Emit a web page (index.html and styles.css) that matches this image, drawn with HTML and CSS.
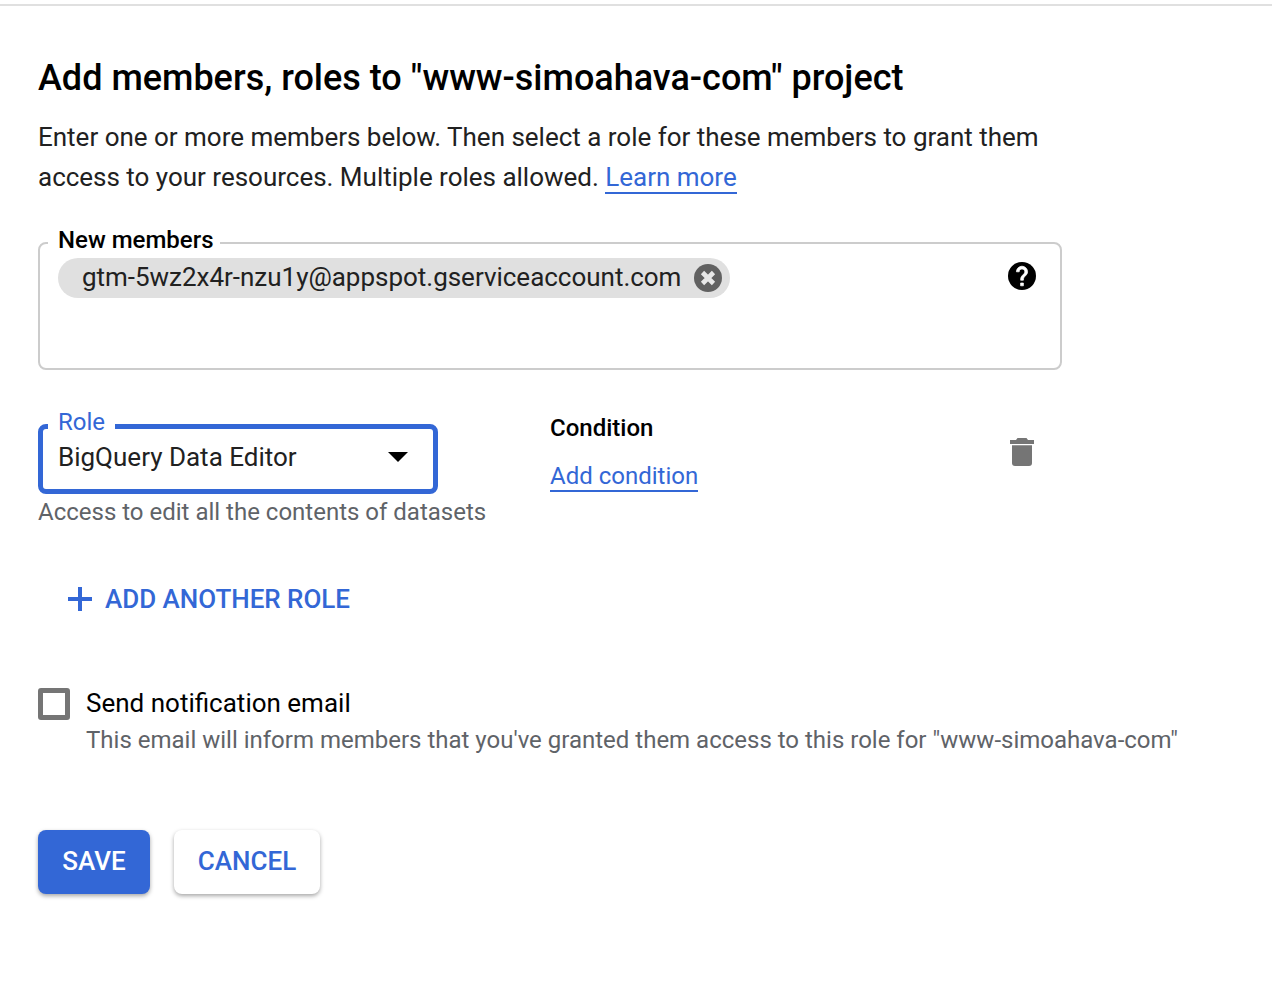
FILE: index.html
```html
<!DOCTYPE html>
<html lang="en">
  <head>
    <meta charset="utf-8">
    <title>Add members</title>
    <link rel="stylesheet" href="styles.css">
  </head>
  <body>
    <div class="panel">
      <h1 class="title">Add members, roles to "www-simoahava-com" project</h1>
      <p class="intro">Enter one or more members below. Then select a role for these members to grant them access to your resources. Multiple roles allowed. <a class="link" href="#">Learn more</a></p>

      <div class="members">
        <span class="float-label">New members</span>
        <div class="chip">
          <span class="chip-text">gtm-5wz2x4r-nzu1y@appspot.gserviceaccount.com</span>
          <svg class="chip-close" viewBox="0 0 28 28" width="28" height="28">
            <circle cx="14" cy="14" r="14" fill="#616161"/>
            <path d="M8.500 8.500l11 11M19.500 8.500l-11 11" stroke="#e8e8e8" stroke-width="4.600" fill="none"/>
          </svg>
        </div>
        <svg class="help" viewBox="2 2 20 20" width="28" height="28">
          <circle cx="12" cy="12" r="10" fill="#000"/>
          <path d="M13 19h-2v-2h2v2zm2.070-7.750l-.9.920C13.450 12.900 13 13.500 13 15h-2v-.5c0-1.100.45-2.100 1.170-2.830l1.240-1.260c.37-.36.59-.86.59-1.410 0-1.100-.9-2-2-2s-2 .9-2 2H8c0-2.210 1.790-4 4-4s4 1.790 4 4c0 .88-.36 1.680-.93 2.250z" fill="#fff" stroke="#fff" stroke-width=".5"/>
        </svg>
      </div>

      <div class="role-row">
        <div class="role-col">
          <div class="role-select">
            <span class="float-label role-label">Role</span>
            <span class="role-value">BigQuery Data Editor</span>
            <span class="caret"></span>
          </div>
          <div class="hint">Access to edit all the contents of datasets</div>
        </div>
        <div class="condition">
          <div class="condition-title">Condition</div>
          <a class="link" href="#">Add condition</a>
        </div>
        <svg class="trash" viewBox="0 0 24 28" width="24" height="28">
          <path d="M0 2h6l1.500-2h9L18 2h6v4H0z" fill="#757575"/>
          <path d="M2 7.300h20V25a3 3 0 0 1-3 3H5a3 3 0 0 1-3-3z" fill="#757575"/>
        </svg>
      </div>

      <div class="add-role">
        <svg viewBox="0 0 24 24" width="24" height="24">
          <path d="M10 0h4v10h10v4H14v10h-4V14H0v-4h10z" fill="#3367d6"/>
        </svg>
        <span>ADD ANOTHER ROLE</span>
      </div>

      <div class="notify">
        <span class="checkbox"></span>
        <div>
          <div class="notify-title">Send notification email</div>
          <div class="notify-hint">This email will inform members that you've granted them access to this role for "www-simoahava-com"</div>
        </div>
      </div>

      <div class="actions">
        <button class="btn btn-save">SAVE</button>
        <button class="btn btn-cancel">CANCEL</button>
      </div>
    </div>
  </body>
</html>
```
FILE: styles.css
```css
html, body {
  margin: 0;
  padding: 0;
  background: #fff;
}

body {
  font-family: Roboto, "Liberation Sans", sans-serif;
  color: #000;
  height: 984px;
  overflow: hidden;
}

.panel {
  margin-top: 4px;
  border-top: 2px solid #e0e0e0;
  padding: 48px 0 0 38px;
}

.title {
  margin: 0;
  font-size: 36px;
  line-height: 48px;
  font-weight: 500;
}

.intro {
  margin: 15px 0 0;
  width: 1024px;
  font-size: 26px;
  line-height: 40px;
  letter-spacing: -0.01px;
  color: #212121;
}

.link {
  color: #3367d6;
  text-decoration: none;
  border-bottom: 2px solid #3367d6;
}

/* members box */
.members {
  position: relative;
  box-sizing: border-box;
  width: 1024px;
  height: 128px;
  margin-top: 45px;
  border: 2px solid #ccc;
  border-radius: 8px;
  padding: 14px 18px;
}

.float-label {
  position: absolute;
  top: -18px;
  left: 8px;
  padding: 0 6px 0 10px;
  background: #fff;
  font-size: 24px;
  line-height: 28px;
  font-weight: 500;
}

.chip {
  display: inline-flex;
  align-items: center;
  height: 40px;
  padding: 0 8px 0 24px;
  border-radius: 20px;
  background: #e0e0e0;
}

.chip-text {
  margin-bottom: 2px;
  font-size: 26px;
  letter-spacing: -0.02px;
  color: #212121;
}

.chip-close {
  margin-left: 13px;
}

.help {
  position: absolute;
  top: 18px;
  right: 24px;
}

/* role row */
.role-row {
  display: flex;
  margin-top: 54px;
}

.role-col {
  width: 512px;
}

.role-select {
  position: relative;
  box-sizing: border-box;
  display: flex;
  align-items: center;
  justify-content: space-between;
  width: 400px;
  height: 70px;
  border: 5px solid #3367d6;
  border-radius: 8px;
  padding: 0 25px 0 15px;
}

.role-label {
  top: -21px;
  left: 5px;
  padding-right: 10px;
  color: #3367d6;
  font-weight: 400;
}

.role-value {
  margin-bottom: 4px;
  font-size: 26px;
  color: #212121;
}

.caret {
  margin-bottom: 4px;
  width: 0;
  height: 0;
  border-left: 10px solid transparent;
  border-right: 10px solid transparent;
  border-top: 10px solid #000;
}

.hint {
  margin-top: 1px;
  font-size: 24px;
  line-height: 34px;
  color: #5f6368;
}

.condition {
  width: 460px;
}

.condition-title {
  font-size: 24px;
  line-height: 28px;
  font-weight: 500;
  margin: -10px 0 20px;
}

.condition .link {
  font-size: 24px;
}

.trash {
  margin-top: 14px;
}

/* add role */
.add-role {
  display: flex;
  align-items: center;
  gap: 13px;
  margin: 50px 0 0 30px;
  font-size: 26px;
  line-height: 40px;
  letter-spacing: -0.03px;
  font-weight: 500;
  color: #3367d6;
}

/* notification */
.notify {
  display: flex;
  gap: 16px;
  margin-top: 68px;
}

.checkbox {
  box-sizing: border-box;
  width: 32px;
  height: 32px;
  margin-top: 1px;
  border: 5px solid #757575;
  border-radius: 3px;
}

.notify-title {
  font-size: 26px;
  line-height: 32px;
}

.notify-hint {
  margin-top: 4px;
  font-size: 24px;
  line-height: 34px;
  color: #5f6368;
}

/* buttons */
.actions {
  display: flex;
  gap: 24px;
  margin-top: 73px;
}

.btn {
  height: 64px;
  padding: 0 0 2px;
  border: none;
  border-radius: 8px;
  font-family: inherit;
  font-size: 26px;
  font-weight: 500;
  box-shadow: 0 2px 4px rgba(0,0,0,.35);
}

.btn-save {
  width: 112px;
  background: #3367d6;
  color: #fff;
}

.btn-cancel {
  width: 146px;
  background: #fff;
  color: #3367d6;
}
```
